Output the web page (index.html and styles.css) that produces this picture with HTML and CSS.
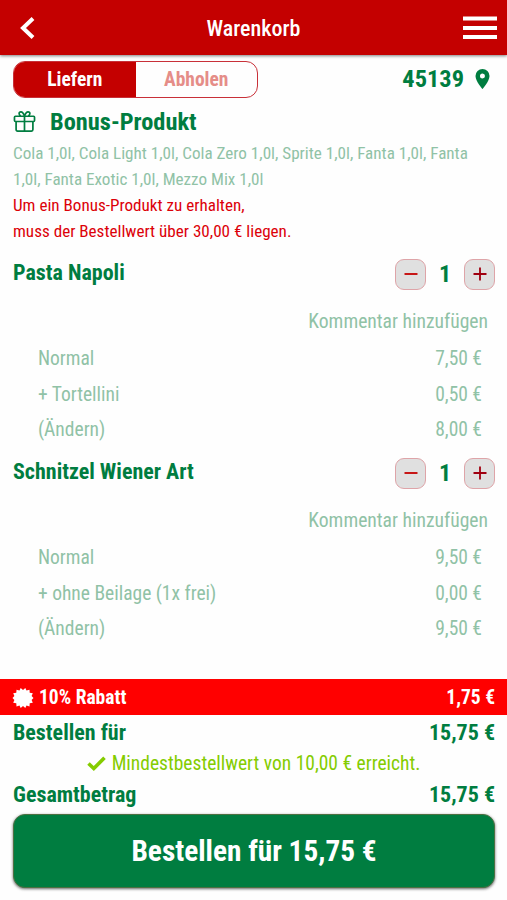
FILE: index.html
```html
<!DOCTYPE html>
<html lang="de">
<head>
  <meta charset="UTF-8">
  <meta name="viewport" content="width=device-width, initial-scale=1.0">
  <title>Warenkorb</title>
  <link rel="stylesheet" href="styles.css">
</head>
<body>
  <header>
    <svg class="back" width="15" height="24" viewBox="0 0 15 24"><path d="M13 2.500L3 12l10 9.500" fill="none" stroke="#fff" stroke-width="4"/></svg>
    <div class="header-title">Warenkorb</div>
    <svg class="menu" width="34" height="24" viewBox="0 0 34 24"><path d="M0 2.500h34M0 12h34M0 21h34" stroke="#fff" stroke-width="3.800"/></svg>
  </header>
  <div class="content">
    <div class="delivery">
      <div class="switch">
        <div class="option active">Liefern</div>
        <div class="option">Abholen</div>
      </div>
      <div class="zip">
        <span>45139</span>
        <svg width="15" height="20" viewBox="0 0 14 20"><path fill="#007d40" fill-rule="evenodd" d="M7 0a7 7 0 0 0-7 7c0 5.200 7 13 7 13s7-7.800 7-13a7 7 0 0 0-7-7zm0 9.500a2.500 2.500 0 1 1 0-5 2.500 2.500 0 0 1 0 5z"/></svg>
      </div>
    </div>
    <div class="bonus">
      <h2>
        <svg width="23" height="21" viewBox="0 0 23 22" fill="none" stroke="#007d40" stroke-width="1.800"><rect x="1" y="5.500" width="21" height="5.500" rx="1"/><path d="M2.700 11v8.500a1.500 1.500 0 0 0 1.500 1.500h14.600a1.500 1.500 0 0 0 1.500-1.500V11M11.500 5.500V21M11.500 5.500C10.500 2.500 9.500 1 7.800 1 5 1 5.500 4 7.500 5.500M11.500 5.500c1-3 2-4.500 3.700-4.500 2.800 0 2.300 3 .3 4.500"/></svg>
        <span>Bonus-Produkt</span>
      </h2>
      <p>Cola 1,0l, Cola Light 1,0l, Cola Zero 1,0l, Sprite 1,0l, Fanta 1,0l, Fanta 1,0l, Fanta Exotic 1,0l, Mezzo Mix 1,0l</p>
      <p class="warning">Um ein Bonus-Produkt zu erhalten,<br>muss der Bestellwert über 30,00 € liegen.</p>
    </div>
    <div class="item">
      <div class="item-head">
        <h3>Pasta Napoli</h3>
        <div class="amount">
          <button type="button"><svg width="14" height="14" viewBox="0 0 14 14"><path d="M.5 7h13" stroke="#c40000" stroke-width="1.800"/></svg></button>
          <span>1</span>
          <button type="button"><svg width="14" height="14" viewBox="0 0 14 14"><path d="M.5 7h13M7 .5v13" stroke="#a00010" stroke-width="1.800"/></svg></button>
        </div>
      </div>
      <div class="comment">Kommentar hinzufügen</div>
      <div class="row"><span>Normal</span><span>7,50 €</span></div>
      <div class="row"><span>+ Tortellini</span><span>0,50 €</span></div>
      <div class="row"><span>(Ändern)</span><span>8,00 €</span></div>
    </div>
    <div class="item">
      <div class="item-head">
        <h3>Schnitzel Wiener Art</h3>
        <div class="amount">
          <button type="button"><svg width="14" height="14" viewBox="0 0 14 14"><path d="M.5 7h13" stroke="#c40000" stroke-width="1.800"/></svg></button>
          <span>1</span>
          <button type="button"><svg width="14" height="14" viewBox="0 0 14 14"><path d="M.5 7h13M7 .5v13" stroke="#a00010" stroke-width="1.800"/></svg></button>
        </div>
      </div>
      <div class="comment">Kommentar hinzufügen</div>
      <div class="row"><span>Normal</span><span>9,50 €</span></div>
      <div class="row"><span>+ ohne Beilage (1x frei)</span><span>0,00 €</span></div>
      <div class="row"><span>(Ändern)</span><span>9,50 €</span></div>
    </div>
  </div>
  <footer>
    <div class="discount">
      <svg width="20" height="20" viewBox="0 0 20 20"><path fill="#fff" d="M10 2L12.300 0l1.200 2.600 3-.9.200 3.100 3.100.500-1.200 2.800L20.500 10l-1.900 2 1.200 2.800-3.100.500-.2 3.100-3-.9L12.300 20 10 18l-2.300 2-1.200-2.500-3 .9-.2-3.100-3.100-.5L1.400 12-.5 10l1.900-1.900L.2 5.300l3.100-.5.200-3.100 3 .9L7.700 0z"/></svg>
      <span>10% Rabatt</span>
      <span class="price">1,75 €</span>
    </div>
    <div class="total"><span>Bestellen für</span><span>15,75 €</span></div>
    <div class="minimum">
      <svg width="19" height="15" viewBox="0 0 19 15"><path d="M1.500 7.500l5.300 5L17.500 1.800" fill="none" stroke="#84cc00" stroke-width="3.600"/></svg>
      <span>Mindestbestellwert von 10,00 € erreicht.</span>
    </div>
    <div class="total"><span>Gesamtbetrag</span><span>15,75 €</span></div>
    <button type="button" class="order">Bestellen für 15,75 €</button>
  </footer>
</body>
</html>
```

FILE: styles.css
```css
* {
  box-sizing: border-box;
}
body {
  font-family: "Roboto Condensed", Roboto, sans-serif;
  font-stretch: 75%;
  margin: 0;
  background-color: #fefefe;
  color: #007d40;
  display: flex;
  flex-direction: column;
  height: 900px;
  overflow: hidden;
}
button {
  font-family: inherit;
  font-stretch: inherit;
  padding: 0;
}
svg {
  flex: none;
  overflow: visible;
}
header {
  background-color: #c40000;
  color: white;
  height: 55px;
  padding: 1px 10px 0 20px;
  display: flex;
  align-items: center;
  box-shadow: 0 1px 3px rgba(0, 0, 0, 0.5);
}
.header-title {
  flex: 1;
  text-align: center;
  font-size: 22px;
  font-weight: 500;
  padding-left: 9px;
}
.content {
  flex: 1;
  padding: 6px 12px 0 13px;
}
.delivery {
  display: flex;
  justify-content: space-between;
  align-items: center;
}
.switch {
  display: flex;
  width: 245px;
  height: 37px;
  border: 1px solid #c83038;
  border-radius: 12px;
  overflow: hidden;
}
.option {
  flex: 1;
  text-align: center;
  line-height: 36px;
  font-size: 19.5px;
  font-weight: bold;
  color: #e58d88;
}
.option.active {
  background-color: #c40000;
  color: white;
}
.zip {
  display: flex;
  align-items: center;
  gap: 11px;
  padding: 0 5px 2px 0;
  font-size: 24.4px;
  font-weight: bold;
}
.bonus h2 {
  display: flex;
  align-items: center;
  gap: 14px;
  height: 43px;
  margin: 0;
  padding-top: 4px;
  font-size: 24.4px;
}
.bonus p {
  margin: 0;
  font-size: 17.1px;
  line-height: 25.6px;
  color: #90c2a6;
}
.bonus .warning {
  padding-top: 1px;
  color: #dc0008;
}
.item {
  height: 199px;
}
.bonus + .item {
  margin-top: 14px;
}
.item-head {
  display: flex;
  justify-content: space-between;
  height: 36px;
}
.item-head h3 {
  margin: 0;
  font-size: 22px;
  line-height: 30px;
}
.amount {
  display: flex;
  align-items: center;
  height: 32px;
}
.amount span {
  width: 38px;
  text-align: center;
  font-size: 24px;
  font-weight: bold;
}
.amount button {
  display: flex;
  align-items: center;
  justify-content: center;
  width: 31px;
  height: 31px;
  background-color: #e0e0e0;
  border: 1px solid #dea4a8;
  border-radius: 9px;
}
.comment {
  padding-right: 7px;
  text-align: right;
  font-size: 19.6px;
  line-height: 56px;
  height: 47px;
  color: #90c2a6;
}
.row {
  display: flex;
  justify-content: space-between;
  padding: 0 13px 0 25px;
  font-size: 19.5px;
  line-height: 35.5px;
  color: #90c2a6;
}
footer {
  height: 221px;
}
.discount {
  display: flex;
  align-items: center;
  gap: 6px;
  height: 36px;
  padding: 1px 12px 0 13px;
  background-color: #ff0000;
  color: white;
  font-size: 19.5px;
  font-weight: bold;
}
.discount .price {
  margin-left: auto;
}
.total {
  display: flex;
  justify-content: space-between;
  padding: 0 12px 0 13px;
  font-size: 22px;
  font-weight: bold;
  line-height: 36px;
  height: 33px;
}
.minimum {
  display: flex;
  align-items: center;
  justify-content: center;
  gap: 6px;
  height: 29px;
  padding-top: 2px;
  font-size: 19.5px;
  color: #84cc00;
}
.order {
  display: block;
  width: 482px;
  height: 74px;
  margin: 4px 0 0 13px;
  background-color: #007d40;
  color: white;
  border: 1px solid #4d7041;
  border-radius: 12px;
  box-shadow: 0 1px 3px rgba(0, 0, 0, 0.6);
  font-size: 29.3px;
  font-weight: bold;
}
```
